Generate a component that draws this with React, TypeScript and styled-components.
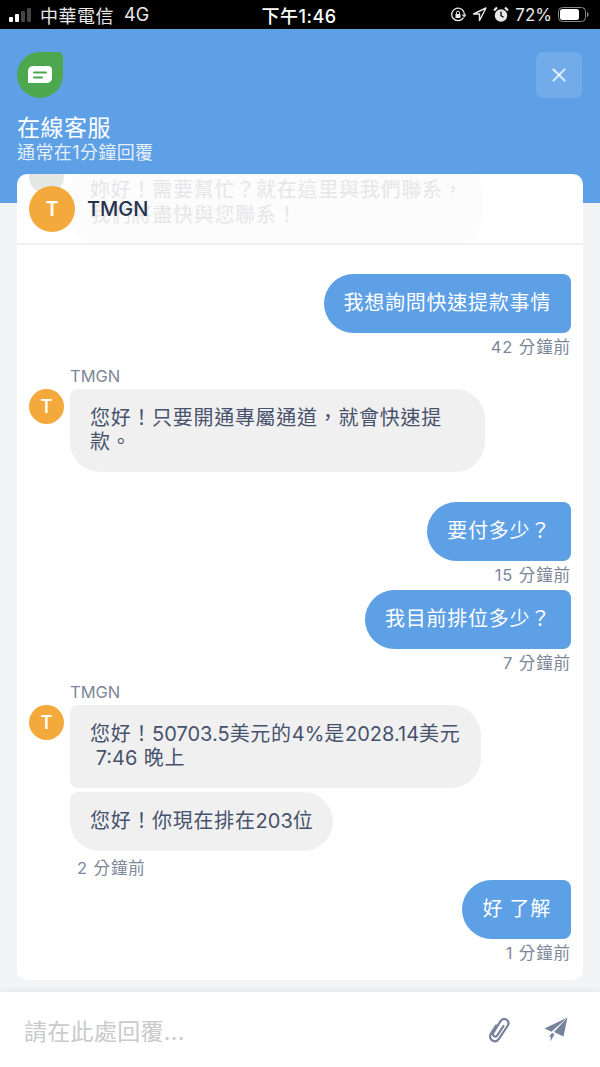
import React from 'react';
import styled, { createGlobalStyle } from 'styled-components';
import { X } from 'lucide-react';

const GlobalStyle = createGlobalStyle`
  html, body {
    margin: 0;
    padding: 0;
    background: #f3f4f6;
  }
  * {
    box-sizing: border-box;
  }
`;

const fontStack = `Inter, "Noto Sans CJK TC", sans-serif`;

const Page = styled.div`
  width: 600px;
  height: 1067px;
  overflow: hidden;
  position: relative;
  display: flex;
  flex-direction: column;
  background: #f3f4f6;
  font-family: ${fontStack};
`;

const StatusBar = styled.div`
  height: 29px;
  background: #000;
  color: #fff;
  display: grid;
  grid-template-columns: 1fr auto 1fr;
  align-items: center;
  padding: 0 11px 0 9px;
  font-size: 18px;
  flex-shrink: 0;
`;

const StatusLeft = styled.div`
  display: flex;
  align-items: center;
  gap: 5px;
  color: #e8e8e8;
`;

const StatusTime = styled.div`
  font-weight: 500;
  font-size: 18px;
  letter-spacing: 0.5px;
`;

const StatusRight = styled.div`
  display: flex;
  align-items: center;
  justify-content: flex-end;
  gap: 6px;
  color: #e8e8e8;
`;

const Carrier = styled.span`
  margin-right: 5px;
  letter-spacing: 0.5px;
`;

const BatteryLevel = styled.span`
  font-size: 17px;
`;

const Hero = styled.div`
  background: #5ea0e6;
  height: 174px;
  padding: 23px 18px 0 17px;
  display: flex;
  flex-direction: column;
  flex-shrink: 0;
`;

const HeroTop = styled.div`
  display: flex;
  justify-content: space-between;
  align-items: flex-start;
`;

const LogoLeaf = styled.div`
  width: 46px;
  height: 46px;
  background: #4ca74f;
  border-radius: 50% 5px 50% 50%;
  display: flex;
  align-items: center;
  justify-content: center;
`;

const CloseButton = styled.button`
  width: 46px;
  height: 46px;
  border: 0;
  padding: 0;
  border-radius: 7px;
  background: rgba(255, 255, 255, 0.12);
  color: rgba(255, 255, 255, 0.72);
  display: flex;
  align-items: center;
  justify-content: center;
`;

const HeroTitle = styled.div`
  margin-top: 15px;
  font-size: 23px;
  line-height: 30px;
  color: #fff;
  letter-spacing: 0.5px;
`;

const HeroSub = styled.div`
  font-size: 18px;
  line-height: 20px;
  color: rgba(255, 255, 255, 0.85);
  letter-spacing: 0.4px;
`;

const Card = styled.div`
  position: relative;
  margin: -29px 17px 0;
  height: 806px;
  background: #fff;
  border-radius: 10px;
  display: flex;
  flex-direction: column;
  overflow: hidden;
  flex-shrink: 0;
`;

const CardHeader = styled.div`
  position: relative;
  height: 71px;
  border-bottom: 2px solid #eff0f2;
  padding: 12px 12px 0;
  display: flex;
  align-items: flex-start;
  gap: 12px;
  flex-shrink: 0;
`;

const FadedGreeting = styled.div`
  position: absolute;
  top: -11px;
  left: 53px;
  width: 413px;
  height: 80px;
  padding: 15px 20px;
  border-radius: 25px;
  background: #fcfcfc;
  font-size: 20px;
  line-height: 25px;
  letter-spacing: 0.75px;
  white-space: nowrap;
  color: #e6e6e8;
`;

const FadedAvatar = styled.div`
  position: absolute;
  top: -15px;
  left: 12px;
  width: 35px;
  height: 35px;
  background: #e4e8e5;
  border-radius: 50%;
`;

const HeaderAvatar = styled.div`
  position: relative;
  width: 46px;
  height: 46px;
  border-radius: 50%;
  background: #f4a93c;
  color: #fff;
  display: flex;
  align-items: center;
  justify-content: center;
  font-size: 20px;
  font-weight: 600;
`;

const HeaderName = styled.div`
  position: relative;
  font-size: 20px;
  font-weight: 500;
  line-height: 46px;
  color: #27314f;
`;

const Thread = styled.div`
  display: flex;
  flex-direction: column;
  padding: 29px 12px 0 12px;
`;

const OutRow = styled.div<{ $gap?: number }>`
  display: flex;
  flex-direction: column;
  align-items: flex-end;
  margin-top: ${(p) => p.$gap ?? 0}px;
`;

const OutBubble = styled.div`
  background: #5ea0e6;
  color: #fff;
  font-size: 20px;
  line-height: 25px;
  letter-spacing: 0.75px;
  padding: 17px 20px;
  border-radius: 30px 8px 8px 30px;
`;

const TimeStamp = styled.div<{ $left?: boolean }>`
  font-size: 16.5px;
  line-height: 20px;
  height: 20px;
  margin-top: ${(p) => (p.$left ? '7px' : '4px')};
  padding: ${(p) => (p.$left ? '0 0 0 48px' : '0')};
  color: #7e8799;
  letter-spacing: 0.9px;
`;

const InGroup = styled.div<{ $gap: number }>`
  display: grid;
  grid-template-columns: 41px 1fr;
  margin-top: ${(p) => p.$gap}px;
`;

const SenderName = styled.div`
  grid-column: 2;
  font-size: 16.5px;
  line-height: 16px;
  height: 21px;
  color: #7e8799;
`;

const SmallAvatar = styled.div`
  width: 35px;
  height: 35px;
  border-radius: 50%;
  background: #f4a93c;
  color: #fff;
  display: flex;
  align-items: center;
  justify-content: center;
  font-size: 18px;
  font-weight: 600;
`;

const InStack = styled.div`
  display: flex;
  flex-direction: column;
  align-items: flex-start;
  gap: 4px;
`;

const InBubble = styled.div<{ $width?: number; $first?: boolean }>`
  width: ${(p) => (p.$width ? `${p.$width}px` : 'auto')};
  background: #f0f0f1;
  color: #47526c;
  font-size: 20px;
  line-height: 24px;
  letter-spacing: 0.7px;
  padding: 17px 20px 18px;
  white-space: ${(p) => (p.$first ? 'nowrap' : 'normal')};
  border-radius: ${(p) => (p.$first ? '8px 30px 30px 8px' : '8px 30px 30px 30px')};
`;

// digits run tighter than the CJK text around them
const Num = styled.span`
  letter-spacing: 0;
`;

const Composer = styled.div`
  position: absolute;
  left: 0;
  right: 0;
  bottom: 0;
  height: 75px;
  background: #fff;
  box-shadow: 0 -2px 5px rgba(0, 0, 0, 0.05);
  display: flex;
  align-items: center;
  padding: 8px 32px 8px 24px;
`;

const Placeholder = styled.div`
  flex: 1;
  font-size: 23px;
  letter-spacing: 0.3px;
  color: #c9cacc;
`;

const ComposerIcons = styled.div`
  display: flex;
  align-items: center;
  gap: 33px;
`;

function SignalBars() {
  return (
    <svg width="26" height="14" viewBox="0 0 26 14">
      <rect x="0" y="9" width="4" height="5" rx="1" fill="#fff" />
      <rect x="6" y="6" width="4" height="8" rx="1" fill="#fff" />
      <rect x="12" y="3" width="4" height="11" rx="1" fill="#444" />
      <rect x="18" y="0" width="4" height="14" rx="1" fill="#444" />
    </svg>
  );
}

function LockRotation() {
  return (
    <svg width="16" height="16" viewBox="0 0 16 16" fill="none" stroke="#e8e8e8" strokeWidth="1.3">
      <path d="M13.5 10.5A6.3 6.3 0 1 1 14.3 8" />
      <path d="M12.4 7.6l1.9 1.9 1.5-2" />
      <rect x="5.5" y="7" width="5" height="4" rx="0.6" fill="#e8e8e8" stroke="none" />
      <path d="M6.4 7V5.8a1.6 1.6 0 0 1 3.2 0V7" strokeWidth="1" />
    </svg>
  );
}

function LocationArrow() {
  return (
    <svg width="15" height="15" viewBox="0 0 15 15" fill="none" stroke="#e8e8e8" strokeWidth="1.4" strokeLinejoin="round">
      <path d="M14 1L1.5 7h6V13.5z" />
    </svg>
  );
}

function AlarmClock() {
  return (
    <svg width="16" height="17" viewBox="0 0 16 17">
      <circle cx="8" cy="9.500" r="6.200" fill="#e8e8e8" />
      <path d="M8 5.500v4.200l2.600 1.600" stroke="#000" strokeWidth="1.300" fill="none" />
      <path d="M1 4.500L4 1.500M15 4.500L12 1.500" stroke="#e8e8e8" strokeWidth="2.200" />
    </svg>
  );
}

function Battery() {
  return (
    <svg width="31" height="15" viewBox="0 0 31 15">
      <rect x="0.5" y="0.5" width="27" height="14" rx="4" fill="none" stroke="#8a8a8a" />
      <rect x="2" y="2" width="19" height="11" rx="2.500" fill="#fff" />
      <path d="M29 5v5c1-.3 1.600-1.300 1.600-2.500S30 5.300 29 5z" fill="#8a8a8a" />
    </svg>
  );
}

function ChatGlyph() {
  return (
    <svg width="24" height="18" viewBox="0 0 24 18">
      <path d="M5 0h15a4 4 0 0 1 4 4v8a5 5 0 0 1-5 5H1a1 1 0 0 1-1-1V5a5 5 0 0 1 5-5z" fill="#fff" />
      <rect x="5" y="5.500" width="14" height="2" rx="1" fill="#4ca74f" />
      <rect x="5" y="10.500" width="10" height="2" rx="1" fill="#4ca74f" />
    </svg>
  );
}

function PaperClip() {
  return (
    <svg width="24" height="26" viewBox="0 0 24 26" fill="none" stroke="#76829a" strokeWidth="2.200" strokeLinecap="round">
      <path d="M9 8.500L4 16.500c-1.800 3-.8 5.700 1.400 7 2.300 1.300 5 .8 6.700-1.800L20.500 9c1.600-2.500 1-5-1-6.300-2.100-1.300-4.500-.8-6 1.500L6.500 15.500c-.9 1.500-.5 2.900.6 3.600 1.100.7 2.500.4 3.400-1L16.500 9" />
    </svg>
  );
}

function PaperPlane() {
  return (
    <svg width="24" height="25" viewBox="0 0 24 25" fill="#76829a">
      <path d="M23.500 0.500L0.500 11.500l7 3.200z" />
      <path d="M23.500 0.500L10 15l9.500 4.500z" />
      <path d="M8 16l2.500 1.200L6.500 24.500l.3-5-2 .3z" />
    </svg>
  );
}

export default function App() {
  return (
    <Page>
      <GlobalStyle />
      <StatusBar>
        <StatusLeft>
          <SignalBars />
          <Carrier>中華電信</Carrier>
          <span>4G</span>
        </StatusLeft>
        <StatusTime>下午1:46</StatusTime>
        <StatusRight>
          <LockRotation />
          <LocationArrow />
          <AlarmClock />
          <BatteryLevel>72%</BatteryLevel>
          <Battery />
        </StatusRight>
      </StatusBar>
      <Hero>
        <HeroTop>
          <LogoLeaf>
            <ChatGlyph />
          </LogoLeaf>
          <CloseButton aria-label="close">
            <X size={22} strokeWidth={2.4} />
          </CloseButton>
        </HeroTop>
        <HeroTitle>在線客服</HeroTitle>
        <HeroSub>通常在1分鐘回覆</HeroSub>
      </Hero>
      <Card>
        <CardHeader>
          <FadedAvatar />
          <FadedGreeting>
            妳好！需要幫忙？就在這里與我們聯系，
            <br />
            我們將盡快與您聯系！
          </FadedGreeting>
          <HeaderAvatar>T</HeaderAvatar>
          <HeaderName>TMGN</HeaderName>
        </CardHeader>
        <Thread>
          <OutRow>
            <OutBubble>我想詢問快速提款事情</OutBubble>
            <TimeStamp>42 分鐘前</TimeStamp>
          </OutRow>
          <InGroup $gap={11}>
            <span />
            <SenderName>TMGN</SenderName>
            <SmallAvatar>T</SmallAvatar>
            <InStack>
              <InBubble $width={415}>您好！只要開通專屬通道，就會快速提款。</InBubble>
            </InStack>
          </InGroup>
          <OutRow $gap={30}>
            <OutBubble>要付多少？</OutBubble>
            <TimeStamp>15 分鐘前</TimeStamp>
          </OutRow>
          <OutRow $gap={5}>
            <OutBubble>我目前排位多少？</OutBubble>
            <TimeStamp>7 分鐘前</TimeStamp>
          </OutRow>
          <InGroup $gap={11}>
            <span />
            <SenderName>TMGN</SenderName>
            <SmallAvatar>T</SmallAvatar>
            <InStack>
              <InBubble $width={411} $first>
                您好！<Num>50703.5</Num>美元的<Num>4%</Num>是<Num>2028.14</Num>美元
                <br />
                <Num>&nbsp;7:46</Num> 晚上
              </InBubble>
              <InBubble>
                您好！你現在排在<Num>203</Num>位
              </InBubble>
            </InStack>
          </InGroup>
          <TimeStamp $left>2 分鐘前</TimeStamp>
          <OutRow $gap={2}>
            <OutBubble>好 了解</OutBubble>
            <TimeStamp>1 分鐘前</TimeStamp>
          </OutRow>
        </Thread>
      </Card>
      <Composer>
        <Placeholder>請在此處回覆...</Placeholder>
        <ComposerIcons>
          <PaperClip />
          <PaperPlane />
        </ComposerIcons>
      </Composer>
    </Page>
  );
}
